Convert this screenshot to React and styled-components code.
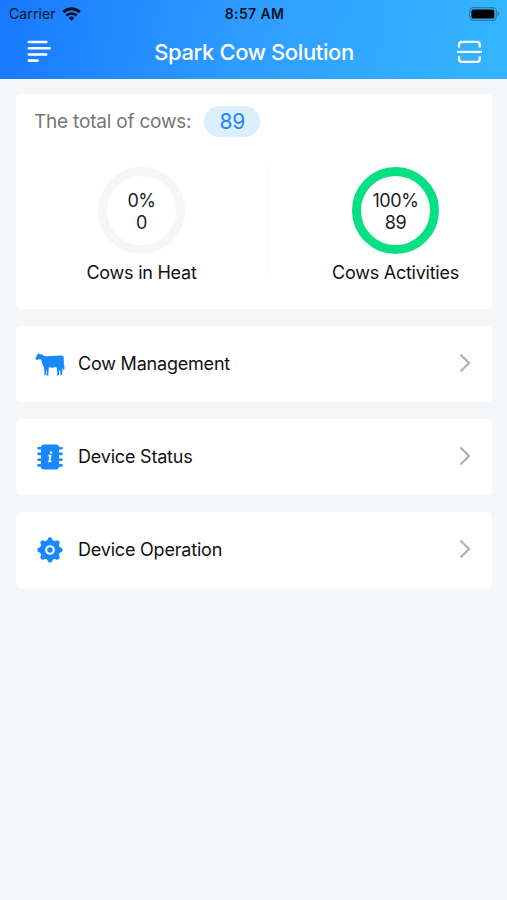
import React from 'react'
import styled, { createGlobalStyle } from 'styled-components'

function App() {
    return (
        <>
            <GlobalStyle />
            <Screen>
                <Header>
                    <StatusBar>
                        <Carrier>
                            <span>Carrier</span>
                            <WifiIcon />
                        </Carrier>
                        <Clock>8:57 AM</Clock>
                        <BatteryIcon />
                    </StatusBar>
                    <NavBar>
                        <MenuIcon />
                        <Title>Spark Cow Solution</Title>
                        <ScanIcon />
                    </NavBar>
                </Header>
                <Content>
                    <Summary>
                        <Total>
                            <TotalLabel>The total of cows:</TotalLabel>
                            <Badge>89</Badge>
                        </Total>
                        <Charts>
                            <Chart>
                                <Ring $color='#f5f7f7'>
                                    <Value>0%</Value>
                                    <Value>0</Value>
                                </Ring>
                                <ChartLabel>Cows in Heat</ChartLabel>
                            </Chart>
                            <Divider />
                            <Chart>
                                <Ring $color='#06e082'>
                                    <Value>100%</Value>
                                    <Value>89</Value>
                                </Ring>
                                <ChartLabel>Cows Activities</ChartLabel>
                            </Chart>
                        </Charts>
                    </Summary>
                    <MenuRow icon={<CowIcon />} label='Cow Management' />
                    <MenuRow icon={<ChipIcon />} label='Device Status' />
                    <MenuRow icon={<GearIcon />} label='Device Operation' />
                </Content>
            </Screen>
        </>
    )
}

export default App

function MenuRow({ icon, label }) {
    return (
        <Row>
            <RowIcon>{icon}</RowIcon>
            <RowLabel>{label}</RowLabel>
            <svg width='12' height='20' viewBox='0 0 12 20' fill='none'>
                <path d='M1.5 1.5 10 10 1.5 18.5' stroke='#adadad' strokeWidth='2.1' />
            </svg>
        </Row>
    )
}

function WifiIcon() {
    return (
        <svg width='19' height='14' viewBox='0 0 19 14' fill='none' stroke='#061222' strokeWidth='3'>
            <path d='M1.3 5.1a11.7 11.7 0 0 1 16.4 0' />
            <path d='M4.3 8.6a7.4 7.4 0 0 1 10.4 0' strokeWidth='2.6' />
            <path d='M9.5 13.8 6.6 10.9a4.2 4.2 0 0 1 5.8 0z' fill='#061222' stroke='none' />
        </svg>
    )
}

function BatteryIcon() {
    return (
        <svg width='31' height='14' viewBox='0 0 31 14'>
            <rect x='.6' y='.6' width='26.8' height='12.8' rx='4' fill='none' stroke='#247eb2' strokeWidth='1.2' />
            <rect x='2.4' y='2.4' width='23' height='9.2' rx='2.2' fill='#000' />
            <path d='M28.6 4.8c2.2.5 2.2 3.9 0 4.4z' fill='#247eb2' />
        </svg>
    )
}

function MenuIcon() {
    return (
        <svg width='24' height='24' viewBox='0 0 24 24' stroke='#fff' strokeWidth='2.6' strokeLinecap='round'>
            <path d='M1.9 2H19.2M1.9 8.2H22.7M1.9 14.5H19.2M1.9 20.6H10.6' />
        </svg>
    )
}

function ScanIcon() {
    return (
        <svg width='25' height='24' viewBox='0 0 25 24' fill='none' stroke='#fff' strokeWidth='2.2'>
            <path d='M2 7.4V4.6Q2 1.8 4.8 1.8H20Q22.8 1.8 22.8 4.6V7.4' />
            <path d='M0 11.9H25' />
            <path d='M2 16.3V19.1Q2 21.9 4.8 21.9H20Q22.8 21.9 22.8 19.1V16.3' />
        </svg>
    )
}

function CowIcon() {
    return (
        <svg width='30' height='24' viewBox='0 0 30 24' fill='#1989fa'>
            <path d='M.2 5.9 2.1 3.9.9 2.9 3 2.6 3.5.4 4.6 2.1 6.4 2.4 8.2 2.8 7.9 3.6 10.2 4.3 15 3.9 21 3.7 26.6 3.4Q28.7 3.4 28.7 5.8L28.9 12.3 29.7 16 28.7 18.4 27.7 15.5 27.5 18 27 22.9 25.2 23.2 25.5 21.7 25 17.7 24.4 18.5 23.9 23.3 21.8 23.5 22.3 21.4 22 16 20.9 15 17.6 15.7 13.8 15.2 13.6 18.4 13.3 23.4 11.3 23.5 11.8 20.8 11.4 17.6 11 19.2 10.9 22.8 8.9 22.9 9.5 21 8.9 15 7.1 11.8 6.2 7.6 3.8 7.2 2.2 7.9.9 7.4z' />
        </svg>
    )
}

function ChipIcon() {
    return (
        <svg width='26' height='26' viewBox='0 0 26 26'>
            <path
                d='M1.5 4.3H24.5M1.5 9.9H24.5M1.5 15.7H24.5M1.5 21.4H24.5'
                stroke='#1989fa'
                strokeWidth='2.6'
                strokeLinecap='round'
            />
            <rect x='4' y='.6' width='18' height='24.8' rx='3' fill='#1989fa' />
            <circle cx='14.1' cy='8.5' r='1.3' fill='#fff' />
            <path d='M11.4 11.6H13.5L12.3 17.4H14.4' fill='none' stroke='#fff' strokeWidth='1.8' />
        </svg>
    )
}

function GearIcon() {
    return (
        <svg width='26' height='26' viewBox='0 0 26 26' fill='#1989fa'>
            <circle cx='13' cy='13' r='10.1' />
            {[0, 45, 90, 135, 180, 225, 270, 315].map((angle) => (
                <path
                    key={angle}
                    d='M8.6 4.6Q10.4 3.9 10.6 2.4Q10.9.3 13 .3T15.4 2.4Q15.6 3.9 17.4 4.6L13 9z'
                    transform={`rotate(${angle} 13 13)`}
                />
            ))}
            <circle cx='13' cy='13' r='3.8' fill='none' stroke='#fff' strokeWidth='2.1' />
        </svg>
    )
}

const GlobalStyle = createGlobalStyle`
    * {
        box-sizing: border-box;
    }

    body {
        margin: 0;
        background: #f4f6f8;
        font-family: Inter, "Liberation Sans", sans-serif;
    }

    svg {
        display: block;
        flex-shrink: 0;
    }
`

const Screen = styled.main`
    min-height: 100vh;
    background: #f4f6f8;
`

const Header = styled.header`
    height: 79px;
    background: linear-gradient(100deg, #1879ff 0%, #2f9fff 52%, #34b6ff 100%);
`

const StatusBar = styled.div`
    height: 27px;
    padding: 0 7px 0 9px;
    display: grid;
    grid-template-columns: 1fr auto 1fr;
    align-items: center;
    color: #061222;

    > svg {
        justify-self: end;
    }
`

const Carrier = styled.div`
    display: flex;
    align-items: center;
    gap: 6px;
    font-size: 14px;
    letter-spacing: 0.1px;
`

const Clock = styled.time`
    font-size: 14px;
    font-weight: 600;
    letter-spacing: 0.35px;
`

const NavBar = styled.div`
    height: 50px;
    padding: 0 25px 0 27px;
    display: flex;
    align-items: center;
    justify-content: space-between;
`

const Title = styled.h1`
    margin: 0;
    color: #fff;
    font-size: 22px;
    font-weight: 500;
    letter-spacing: -0.38px;
`

const Content = styled.div`
    padding: 15px 15px 0 16px;
    display: flex;
    flex-direction: column;
    gap: 17.4px;
`

const Card = styled.section`
    background: #fff;
    border-radius: 5px;
`

const Summary = styled(Card)`
    height: 214.6px;
    padding-top: 12px;
`

const Total = styled.div`
    height: 31px;
    padding-left: 18px;
    display: flex;
    align-items: center;
    gap: 13px;
`

const TotalLabel = styled.span`
    color: #777;
    font-size: 19px;
    letter-spacing: -0.2px;
`

const Badge = styled.span`
    width: 56px;
    height: 31px;
    border-radius: 16px;
    background: #dceffe;
    color: #1989fa;
    font-size: 21px;
    line-height: 32px;
    letter-spacing: -0.2px;
    text-align: center;
`

const Charts = styled.div`
    padding-top: 30px;
    display: grid;
    grid-template-columns: 251px 3px 251px;
    width: 505px;
    margin-right: -29px;
`

const Chart = styled.div`
    display: flex;
    flex-direction: column;
    align-items: center;
    gap: 8px;
`

const Ring = styled.div`
    width: 87px;
    height: 87px;
    padding-top: 2px;
    display: flex;
    flex-direction: column;
    align-items: center;
    justify-content: center;
    border: 9px solid ${(props) => props.$color};
    border-radius: 50%;
`

const Value = styled.span`
    color: #1d1d1f;
    font-size: 18px;
    line-height: 22px;
    letter-spacing: -0.4px;
`

const ChartLabel = styled.span`
    color: #111;
    font-size: 18px;
    line-height: 22px;
    letter-spacing: -0.24px;
`

const Divider = styled.div`
    width: 1px;
    height: 112px;
    margin-left: 1px;
    background: #f3f5f6;
`

const Row = styled(Card)`
    height: 75.6px;
    padding: 0 21px 1px 19px;
    display: flex;
    align-items: center;
`

const RowIcon = styled.div`
    width: 30px;
    padding-top: 1px;
    display: flex;
    justify-content: center;
`

const RowLabel = styled.span`
    flex: 1;
    padding: 1px 0 0 13px;
    color: #111;
    font-size: 18px;
    letter-spacing: -0.2px;
`
